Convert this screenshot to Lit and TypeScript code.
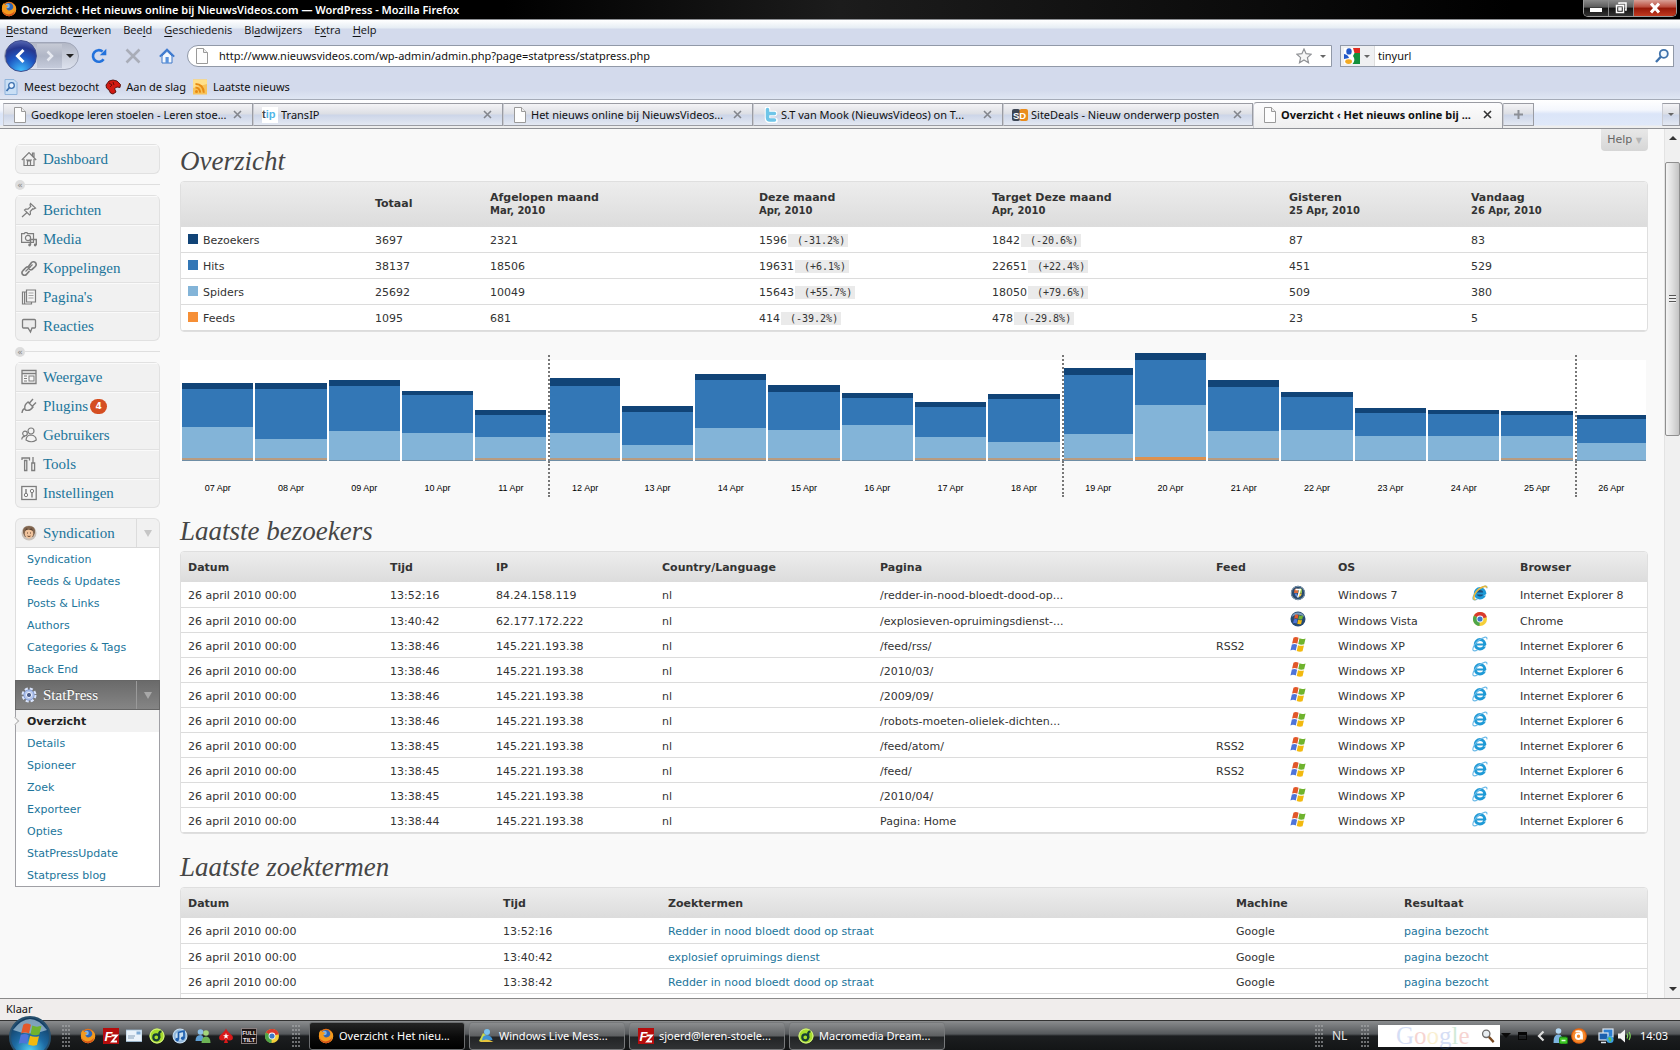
import { LitElement, html, css, svg, nothing } from "lit";
import type { TemplateResult } from "lit";
import { customElement } from "lit/decorators.js";
import { classMap } from "lit/directives/class-map.js";
import { styleMap } from "lit/directives/style-map.js";

/* ---------- icons ---------- */

const flag = (x = 0, y = 0, s = 1) => svg`<g transform="translate(${x} ${y}) scale(${s})">
  <path d="M3 1.5Q5 .3 7.4 1.6L6.3 6.6Q4.2 5.4 1.8 6.5z" fill="#e2582a"/>
  <path d="M8.2 2Q10.4 3.2 13.4 2.2L12.2 7.2Q9.6 8 7.1 7z" fill="#6fb32e"/>
  <path d="M1.6 7.3Q4 6.3 6.1 7.5L5 12.6Q2.8 11.4.4 12.4z" fill="#4f74d9"/>
  <path d="M6.9 7.9Q9.4 8.9 12 8.1L10.8 13.2Q8.2 14 5.8 12.9z" fill="#f2b90f"/></g>`;

const chromeMark = svg`<circle cx="8" cy="8" r="7" fill="#f5cf3a"/>
  <path d="M8 8L1.9 4.5A7 7 0 0 1 14.8 6.2z" fill="#d9392d"/>
  <path d="M8 8L1.9 4.5A7 7 0 0 0 7.5 15z" fill="#4fa64a"/>
  <circle cx="8" cy="8" r="3.4" fill="#fff"/><circle cx="8" cy="8" r="2.6" fill="#3d78c9"/>`;

const firefoxMark = svg`<circle cx="8" cy="8" r="7.2" fill="#e0701a"/>
  <circle cx="8" cy="6.8" r="4.8" fill="#2f66b5"/><circle cx="6.6" cy="5" r="2.2" fill="#7db4e8"/>
  <path d="M1.2 4.5Q2 2.600 3.200 1.700Q3.200 3.200 4.200 4Q6 3.800 7.200 5L5.500 6.400Q5.500 9 8.300 9.400Q11 9.400 12.200 7Q12.600 4.500 11 2.200Q15.500 4 15.200 8.500Q14.500 14.600 8.200 15.200Q1.500 14.800.9 8.500z" fill="#f39a1e"/>
  <path d="M1.200 8.500Q2.500 13 7.500 13.400Q12 13 14 9.500Q13 15 8 15.200Q2 14.600 1.200 8.500z" fill="#d4521a"/>`;

const dreamMark = svg`<circle cx="8" cy="8" r="7.500" fill="#a6dc2c"/><circle cx="8" cy="8" r="7" fill="none" stroke="#d9f48a"/>
  <circle cx="7.300" cy="9.300" r="3" fill="none" stroke="#173f35" stroke-width="2.200"/><path d="M10.200 10V5Q10.500 3.600 12.500 3.400" fill="none" stroke="#173f35" stroke-width="2.200"/>`;

const fzMark = svg`<rect width="16" height="16" fill="#b50d0d"/>
  <text x="1.500" y="13" font-family="Liberation Sans" font-size="13" font-weight="700" font-style="italic" fill="#fff">F</text>
  <path d="M8.500 7.500H14L9 13.500H14" fill="none" stroke="#fff" stroke-width="1.800"/>`;

const ieMark = svg`<circle cx="8" cy="8.300" r="4.700" fill="none" stroke="#1f9ad6" stroke-width="3"/>
  <path d="M5 8.500H14.200" stroke="#1f9ad6" stroke-width="2"/><path d="M11.500 10.500H16V8.500z" fill="#fff"/>
  <path d="M14.800 3.300Q15.600.6 12.400 1.300Q6.500 3 2.400 9Q-.6 14.500 2.200 14.900Q4 14.800 5.600 13.700" fill="none" stroke="#6dbbe8" stroke-width="1.200"/>`;

const stroke = "#7d7d7d";

const ICONS: Record<string, TemplateResult> = {
  firefox: svg`${firefoxMark}`,
  page: svg`<path d="M2.500.5H9.500L13.500 4.500V15.500H2.500z" fill="#fdfdfd" stroke="#9a9a9a"/><path d="M9.500.5V4.500H13.500" fill="#eee" stroke="#9a9a9a"/>`,
  reload: svg`<path d="M12.600 11.200A5.800 5.800 0 1 1 11.600 3.600" fill="none" stroke="#2372dc" stroke-width="2.600"/><path d="M15.300.8V7.300H8.800z" fill="#2372dc"/>`,
  stop: svg`<path d="M1.500 1.500L14.500 14.500M14.500 1.500L1.500 14.500" stroke="#a9adb8" stroke-width="2.600"/>`,
  home: svg`<path d="M3 8V15H13V8L8 3.300z" fill="#f4f8fe" stroke="#3f78c8"/><path d="M.8 8.600L8 1.600L15.200 8.600" fill="none" stroke="#3f7bd0" stroke-width="2"/><rect x="6.500" y="9" width="3.200" height="6" fill="#5b93dc"/>`,
  star: svg`<path d="M8 1L10.100 5.700L15.200 6.200L11.400 9.600L12.500 14.700L8 12L3.500 14.700L4.600 9.600L.8 6.200L5.900 5.700z" fill="#f6f6f6" stroke="#8e9094" stroke-width="1.200"/>`,
  google: svg`<rect width="16" height="16" fill="#fff"/><path d="M9 0H16V5H10.500z" fill="#e02b20"/><path d="M10.500 5H16V16H8.500Q12 12 9 8z" fill="#14903c"/><ellipse cx="5" cy="3.400" rx="2.700" ry="3.200" fill="#2258c8"/><path d="M0 6Q4 6.500 5 10L0 11z" fill="#2258c8"/><ellipse cx="4.600" cy="13.600" rx="3.400" ry="2.300" fill="#f2a922"/>`,
  find: svg`<circle cx="9.800" cy="5.800" r="4" fill="#f3f9ff" stroke="#3f72ac" stroke-width="1.800"/><path d="M6.800 8.800L2 14" stroke="#3f72ac" stroke-width="2.400"/>`,
  visited: svg`<path d="M2 .5H11L14 3.500V15.500H2z" fill="#c9dff5" stroke="#8fb4dc"/><circle cx="8.500" cy="6.500" r="2.800" fill="#eaf4ff" stroke="#3b6fae" stroke-width="1.300"/><path d="M6.500 8.500L3.500 12" stroke="#3b6fae" stroke-width="1.800"/>`,
  mozilla: svg`<path d="M1 6L4 2L8 1L12 2L15.500 5.500L15 8.500L12 8L9.500 9.500L11 13L8 15L5.500 14L4 11L1.500 9z" fill="#d21a12" stroke="#4f0d08" stroke-width=".9"/><path d="M4 4L7 6L5 8M8 3L9 6" stroke="#5e0d08" stroke-width=".9" fill="none"/>`,
  rss: svg`<path d="M1 .5H15V15.500H1z" fill="#f7c35a"/><path d="M1 .5H15V5L1 9z" fill="#ffe08a"/><circle cx="4.500" cy="12.500" r="1.500" fill="#e88b13"/><path d="M3.500 8.500Q7.800 8.700 8.200 13.700M3.500 5Q11.300 5.300 11.800 13.700" fill="none" stroke="#e88b13" stroke-width="1.900"/>`,
  tip: svg`<rect width="16" height="16" fill="#fff"/><text x="0" y="11" font-family="Liberation Sans" font-weight="700" font-size="11" fill="#44464a">t<tspan fill="#4fb6e8">ip</tspan></text>`,
  twitter: svg`<path d="M5.500 2V11Q5.500 13.500 8 13.500H13M5.500 6.500H12.500" fill="none" stroke="#fff" stroke-width="5.500" stroke-linecap="round"/><path d="M5.500 2.500V10.500Q5.500 13 8 13H12.500M5.500 6.500H12.500" fill="none" stroke="#6fc5e8" stroke-width="3.500" stroke-linecap="round"/>`,
  sitedeals: svg`<rect y="2" width="8" height="12" rx="2" fill="#3d4654"/><rect x="7.500" y="2" width="8.500" height="12" rx="2" fill="#e98c1d"/><text x="1" y="11.500" font-family="Liberation Sans" font-weight="700" font-size="9.500" fill="#fff">SD</text>`,
  house: svg`<path d="M.8 9L8 1.500L15.200 9M3 8V14.500H13V8M11.500 5V2H13V6.500M6.500 14.500V10H9.500V14.500M5 9H11" fill="none" stroke="${stroke}" stroke-width="1.200"/>`,
  pin: svg`<path d="M9.500 1.500L14.500 6L12.500 7L11.800 6.800L9.200 9.500L9.500 12L8.500 13L3.500 8L4.600 7L7 7.200L9.800 4.500L9 3zM6 10.500L1 15" fill="#f2f2f2" stroke="${stroke}" stroke-width="1.200"/>`,
  media: svg`<path d="M.6 2.600H3.500L4 1.600H6L6.500 2.600H12.500V11.400H.6z" fill="#f2f2f2" stroke="${stroke}" stroke-width="1.200"/><circle cx="7" cy="7" r="2.600" fill="none" stroke="${stroke}" stroke-width="1.200"/><path d="M9.500 8.500H15.300V14M9.500 8.500V14" fill="none" stroke="${stroke}" stroke-width="1.400"/><circle cx="8.600" cy="14" r="1.400" fill="${stroke}"/><circle cx="14.200" cy="14" r="1.400" fill="${stroke}"/>`,
  link: svg`<path d="M7.500 6.500L10.500 2.500A2.700 2.700 0 1 1 14.300 6.500L11 9.500A2.500 2.500 0 0 1 8 9M9 8A2.600 2.600 0 0 0 5 7.500L2 10.600A2.600 2.600 0 1 0 5.800 14L8.500 11" fill="none" stroke="${stroke}" stroke-width="1.700"/><path d="M4.500 11.500L11.500 4.500" stroke="${stroke}" stroke-width="1.200"/>`,
  pages: svg`<path d="M5.500 1H14.500V13H5.500zM5 3H1.500V15H10.500V13.500M3.600 3V14.500" fill="#f4f4f4" stroke="${stroke}" stroke-width="1.200"/><path d="M7.500 4H12.500M7.500 6.500H12.500M7.500 9H12.500" stroke="#a5a5a5"/>`,
  comment: svg`<path d="M2.500 1.500H13.500Q14.500 1.500 14.500 2.500V9Q14.500 10 13.500 10H11L9.500 14L7 10H2.500Q1.500 10 1.500 9V2.500Q1.500 1.500 2.500 1.500z" fill="#ececec" stroke="${stroke}" stroke-width="1.300"/>`,
  theme: svg`<path d="M1 1.500H15V14.500H1zM1 4.500H15" fill="#f6f6f6" stroke="${stroke}" stroke-width="1.300"/><path d="M3 7H6M3 9.500H6M3 12H6" stroke="${stroke}"/><rect x="8" y="7" width="5" height="5" fill="none" stroke="${stroke}"/>`,
  plug: svg`<path d="M1 15Q1.500 11 4 10.500M4 11Q2.800 7 7 4L12 9Q9 13.500 4.500 12zM8 5.500L12 1M11 8.500L15 4.500" fill="#f2f2f2" stroke="${stroke}" stroke-width="1.400"/>`,
  users: svg`<circle cx="10" cy="4" r="3" fill="#f2f2f2" stroke="${stroke}" stroke-width="1.200"/><circle cx="4" cy="6.500" r="2.300" fill="#f2f2f2" stroke="${stroke}" stroke-width="1.200"/><path d="M5 13Q5.500 8 10 8Q15 8.500 15.300 13Q10.500 16.500 5 13zM.8 12.500Q.8 9.500 4 9.300" fill="#f2f2f2" stroke="${stroke}" stroke-width="1.200"/>`,
  tools: svg`<path d="M1 4V2H8.500V4.500M3.600 4.500H5.800V14.500H3.600zM12 1V6.500M10.800 7H13.600V14.500H10.800z" fill="#f2f2f2" stroke="${stroke}" stroke-width="1.300"/>`,
  settings: svg`<rect x=".8" y="1.500" width="14.400" height="13" fill="#f6f6f6" stroke="${stroke}" stroke-width="1.300"/><path d="M5 4V8M11 8V12.500" stroke="${stroke}" stroke-width="1.400"/><circle cx="5" cy="10" r="1.700" fill="none" stroke="${stroke}"/><circle cx="11" cy="6" r="1.700" fill="none" stroke="${stroke}"/>`,
  face: svg`<circle cx="8" cy="8" r="7.500" fill="#c9c0b8"/><path d="M2 8Q1 1 8 1Q15 1 14 8L12 12H4z" fill="#80654f"/><ellipse cx="8" cy="8.500" rx="4.200" ry="5" fill="#f0c39c"/><path d="M4 6Q7 3 12 6L11 3.500H5z" fill="#5d4433"/><path d="M6 8H7M9 8H10M6.500 11Q8 12 9.500 11" stroke="#63432f" fill="none"/>`,
  gear: svg`<circle cx="8" cy="8" r="6.200" fill="none" stroke="#d9e4fb" stroke-width="2.600" stroke-dasharray="3 1.870"/><circle cx="8" cy="8" r="5.200" fill="#b3c6ee" stroke="#7d96cf" stroke-width=".8"/><circle cx="8" cy="8" r="2.600" fill="#4e5f8c" stroke="#eef3ff"/>`,
  win7: svg`<circle cx="8" cy="8" r="7.200" fill="#28496c"/><circle cx="8" cy="8" r="6.600" fill="none" stroke="#7e97ad"/><path d="M4.500 4.500Q6.500 3 8 4V8H4z" fill="#d96a3a"/><path d="M8.500 4Q10 3 12 4V8H8.500z" fill="#9ac054"/><path d="M4.500 8.500H7V12Q5.500 11.500 4.500 8.500z" fill="#5f86dd"/><path d="M9 8.500H12Q11.500 11 9 12z" fill="#f2c83a"/><path d="M5.500 4.500H10.200L7.700 12.500" stroke="#fff" stroke-width="1.500" fill="none"/>`,
  vista: svg`<circle cx="8" cy="8" r="7.500" fill="#274a72"/><path d="M1.500 6Q8 1 14.500 6A7 7 0 0 0 1.500 6z" fill="#7e9dbc"/>${flag(2.7, 2.7, 0.78)}`,
  xp: flag(0, 0, 1.16),
  ie: ieMark,
  ie8: svg`<circle cx="8.500" cy="8.500" r="5" fill="#1f4f7c"/>${ieMark}<path d="M14.600 2.800Q14.600.8 12 1.500Q5.500 3.500 2.600 9.500Q.5 14.500 3.500 14.700" fill="none" stroke="#e8b73a" stroke-width="1.700"/>`,
  chrome: svg`${chromeMark}`,
  filezilla: svg`${fzMark}`,
  mail: svg`<rect y="2" width="16" height="11.500" fill="#e9f2fa" stroke="#9fbdd6" stroke-width=".8"/><rect x="10.500" y="3.500" width="4" height="3" fill="#7eaad4"/><path d="M2 8H9M2 10H8" stroke="#86a0b8"/>`,
  dream: svg`${dreamMark}`,
  itunes: svg`<circle cx="8" cy="8" r="7.500" fill="#c8dff2"/><circle cx="8" cy="8" r="5.500" fill="none" stroke="#8fb6dc" stroke-width="2"/><path d="M6.500 11.500V4.500L12 3V10" fill="none" stroke="#1f5fae" stroke-width="1.700"/><circle cx="5.200" cy="11.600" r="1.800" fill="#1f5fae"/><circle cx="10.700" cy="10.200" r="1.800" fill="#1f5fae"/>`,
  messenger: svg`<circle cx="5.500" cy="4" r="2.800" fill="#8cc0e6"/><path d="M.5 13Q.5 7 5.500 7Q9 7.500 9 13z" fill="#5f9fd4"/><circle cx="11" cy="5" r="2.800" fill="#a5d57a"/><path d="M6.500 15Q6.500 8.500 11 8.500Q15.500 8.500 15.500 15z" fill="#6db456"/>`,
  poker: svg`<path d="M8 .5Q9 3 14.500 8Q16 12 12 12.500Q10 12.500 9 11.500L10 15H6L7 11.500Q6 12.500 4 12.500Q0 12 1.500 8Q7 3 8 .5z" fill="#d91a1a"/><path d="M8 5L8.800 7.200H11L9.200 8.500L9.900 10.700L8 9.400L6.100 10.700L6.800 8.500L5 7.200H7.200z" fill="#fff"/>`,
  fulltilt: svg`<rect x=".5" y=".5" width="15" height="15" fill="#1d1414" stroke="#8a7f7f"/><text x="1.200" y="7" font-family="Liberation Sans" font-weight="700" font-size="5.500" fill="#f1eaea">FULL</text><text x="2" y="13.500" font-family="Liberation Sans" font-weight="700" font-size="6" fill="#f1eaea">TILT</text>`,
  live: svg`<path d="M1 13L5 5L9 8L7 14z" fill="#c9d94a"/><circle cx="9" cy="4" r="3" fill="#7ac1ee"/><path d="M4 13Q4 7 9 7Q14 8 14.500 12z" fill="#3f92d4"/><path d="M1 14Q8 9 15.500 14z" fill="#e6c33b"/>`,
  lens: svg`<circle cx="6" cy="5.500" r="4.200" fill="#e8eef2" stroke="#6c6c6c" stroke-width="1.500"/><path d="M9 9L14.500 15" stroke="#7a4a22" stroke-width="2.600"/>`,
  buddy: svg`<circle cx="6.500" cy="3" r="2.800" fill="#b5d8f2"/><path d="M1.500 15Q1 6.500 6.500 6.500Q11 6.500 11 15z" fill="#7cb4e0"/><rect x="7.500" y="9" width="8" height="7" rx="1.500" fill="#3cc424" stroke="#1a7a10"/><path d="M9.500 12.500H13.500" stroke="#e8ffe0" stroke-width="1.500"/>`,
  avast: svg`<circle cx="8" cy="8" r="7.800" fill="#e8640e"/><circle cx="8" cy="8" r="6.600" fill="#f58a2e"/><circle cx="7.500" cy="8.300" r="2.700" fill="none" stroke="#fff" stroke-width="2"/><path d="M4.500 3.600Q11 2 11 7V11.500" fill="none" stroke="#fff" stroke-width="1.800"/>`,
  network: svg`<rect x="5" y="1" width="10" height="8" fill="#2e7fd2" stroke="#dce6f0" stroke-width="1.200"/><rect x="1" y="5" width="9" height="7" fill="#1c5fae" stroke="#dce6f0" stroke-width="1.200"/><path d="M3 14.500H8" stroke="#dce6f0" stroke-width="1.500"/><circle cx="12" cy="11.500" r="3.600" fill="#3aa2e2"/><path d="M10 10Q12 8.500 13 10.500T12 14z" fill="#5fc04a"/>`,
  sound: svg`<path d="M1 5.500H3.500L8 1.500V14.500L3.500 10.500H1z" fill="#f2f2f2"/><path d="M10 5.500Q11.500 8 10 10.500M12 4Q14.500 8 12 12" stroke="#7ed65a" fill="none" stroke-width="1.200"/>`,
};

const icon = (name: string, cls = "ic") =>
  html`<svg class=${cls} viewBox="0 0 16 16" aria-hidden="true">${ICONS[name]}</svg>`;

const base = css`
  *, *::before, *::after { box-sizing: border-box; }
  button, input { font: inherit; color: inherit; border: 0; padding: 0; margin: 0; background: none; }
  a { text-decoration: none; color: inherit; }
  svg { display: block; flex: none; }
  .ic { width: 16px; height: 16px; }
`;

/* ---------- browser window frame ---------- */

const MENUS: [string, string, string][] = [
  ["", "B", "estand"], ["Be", "w", "erken"], ["Bee", "l", "d"], ["", "G", "eschiedenis"],
  ["Bl", "a", "dwijzers"], ["E", "x", "tra"], ["", "H", "elp"],
];

const TABS = [
  { icon: "page", title: "Goedkope leren stoelen - Leren stoe..." },
  { icon: "tip", title: "TransIP" },
  { icon: "page", title: "Het nieuws online bij NieuwsVideos..." },
  { icon: "twitter", title: "S.T van Mook (NieuwsVideos) on T..." },
  { icon: "sitedeals", title: "SiteDeals - Nieuw onderwerp posten" },
  { icon: "page", title: "Overzicht ‹ Het nieuws online bij ...", active: true },
];

@customElement("browser-chrome")
class BrowserChrome extends LitElement {
  static styles = [base, css`
    :host { display: block; font: 11px/16px "Noto Sans", "Open Sans", sans-serif; color: #111; }
    .title { display: flex; height: 20px; padding-left: 1px; background: linear-gradient(90deg, #000 30%, #1c1c1c 50%, #0b0b0b 75%, #000 90%); border-bottom: 1px solid #8d8f93; color: #fff; }
    .title .ic { margin: 1px 4px 0 0; }
    .title h1 { flex: 1; margin: 0; font-size: 11px; font-weight: 600; line-height: 20px; }
    .win { display: flex; height: 17px; margin-right: 3px; border: 1px solid #9b9b9b; border-top: 0; border-radius: 0 0 5px 5px; overflow: hidden; }
    .win button { display: grid; place-items: center; width: 25px; background: linear-gradient(#8b8b8b, #5b5b5b 45%, #111 50%, #333); border-right: 1px solid #8a8a8a; }
    .win .x { width: 42px; background: linear-gradient(#d9a097, #b9493a 45%, #941708 50%, #c23a20); border-right: 0; }
    .bars { background: linear-gradient(#fff, #e6edf4 8px, #d3daec 9px, #d3daec 70px, #dfe6f3); border-bottom: 1px solid #a5abb8; }
    .menu { display: flex; gap: 12px; height: 20px; padding-left: 6px; line-height: 20px; font-family: "Open Sans", "Noto Sans", sans-serif; }
    .menu u { text-underline-offset: 2px; }
    .nav { display: flex; align-items: center; height: 32px; padding: 0 6px 0 4px; }
    .keyhole { display: flex; align-items: center; width: 75px; height: 28px; border: 1px solid #a0a6b8; border-radius: 14px; background: linear-gradient(#b3b8c6, #dde2ee); }
    .back { display: grid; place-items: center; flex: none; width: 32px; height: 32px; border-radius: 50%; border: 1px solid #3d4c8e; background: radial-gradient(circle at 50% 100%, #3fc0ff, #1e54c0 45%, #26378f 70%, #6e7fc4); }
    .fwd { display: grid; place-items: center; flex: 1; height: 24px; background: linear-gradient(#c6cad5, #b0b6c6 50%, #c5cbdb); }
    .drop { display: grid; place-items: center; width: 16px; height: 24px; }
    .arrow { width: 0; height: 0; border: 4px solid transparent; border-top-color: #222; border-bottom: 0; }
    .arrow.grey { border-width: 3px; border-bottom: 0; border-top-color: #666; }
    .tool { display: grid; place-items: center; width: 34px; height: 28px; }
    .tools { display: flex; padding: 0 3px; }
    .field { display: flex; align-items: center; height: 22px; background: #fff; border: 1px solid #9199a8; }
    .field input { flex: 1; min-width: 0; outline: 0; }
    .url { flex: 1; padding: 0 5px 0 6px; border-radius: 12px 0 0 12px; gap: 8px; }
    .url input { padding-left: 1px; }
    .find { width: 20%; margin-left: 8px; padding-right: 3px; }
    .engine { display: flex; align-items: center; gap: 4px; height: 20px; padding: 0 4px 0 3px; background: #eff0f2; border-right: 1px solid #ddd; margin-right: 3px; }
    .marks { display: flex; gap: 6px; height: 27px; padding: 3px 0 0 3px; align-items: center; }
    .marks a { display: flex; align-items: center; gap: 5px; }
    .tabs { display: flex; align-items: flex-start; height: 29px; padding: 3px 0 3px 3px; border-bottom: 1px solid #8f9196; background: linear-gradient(#fff, #f4f7fd 10px, #dbe5f8 14px, #dfe8f9 25px, #eee 26px); }
    .tab { display: flex; align-items: center; flex: 0 1 250px; height: 23px; padding: 0 10px 0 8px; border: 1px solid #9a9ca3; border-left-color: #c9cbd2; background: linear-gradient(#f4f4f6, #dcdee4 10px, #ccd5e8 11px, #e3e8f2); }
    .tab .t { flex: 1; min-width: 0; margin-left: 3px; text-align: left; white-space: nowrap; overflow: hidden; }
    .tab.on { height: 26px; margin-top: -1px; padding-bottom: 2px; border-radius: 4px 4px 0 0; border-bottom: 0; background: linear-gradient(#fcfcfd, #efefef); font-weight: 700; }
    .tab.flush { width: 31px; flex: none; padding: 0; justify-content: center; }
    .tab.list { margin-left: auto; width: 18px; }
  `];

  private cross(color: string) {
    return html`<svg width="9" height="9" viewBox="0 0 9 9"><path d="M1 1L8 8M8 1L1 8" stroke=${color} stroke-width="1.600"/></svg>`;
  }

  render() {
    return html`
      <div class="title">
        ${icon("firefox")}<h1>Overzicht ‹ Het nieuws online bij NieuwsVideos.com — WordPress - Mozilla Firefox</h1>
        <div class="win">
          <button aria-label="Minimaliseren"><svg width="12" height="12"><rect y="6" width="12" height="4" fill="#fff"/></svg></button>
          <button aria-label="Verkleinen"><svg width="12" height="12"><path d="M4 2V1H11V8H10M1.500 3.500H8.500V10.500H1.500zM4 6H6V8H4z" fill="none" stroke="#fff" stroke-width="1.500"/></svg></button>
          <button class="x" aria-label="Sluiten"><svg width="12" height="12"><path d="M2 1.500L10 10.500M10 1.500L2 10.500" stroke="#fff" stroke-width="3"/></svg></button>
        </div>
      </div>
      <div class="bars">
        <div class="menu">${MENUS.map(([a, k, b]) => html`<button>${a}<u>${k}</u>${b}</button>`)}</div>
        <div class="nav">
          <div class="keyhole">
            <button class="back" aria-label="Terug"><svg width="16" height="16"><path d="M10.500 2L4.500 8L10.500 14" fill="none" stroke="#fff" stroke-width="3"/></svg></button>
            <button class="fwd" aria-label="Vooruit"><svg width="12" height="12"><path d="M3.500 1.500L8 6L3.500 10.500" fill="none" stroke="#e6e9f0" stroke-width="2.500"/></svg></button>
            <button class="drop" aria-label="Geschiedenis"><span class="arrow"></span></button>
          </div>
          <div class="tools">
            <button class="tool" aria-label="Vernieuwen">${icon("reload")}</button>
            <button class="tool" aria-label="Stoppen">${icon("stop")}</button>
            <button class="tool" aria-label="Startpagina">${icon("home")}</button>
          </div>
          <div class="field url">
            ${icon("page")}
            <input aria-label="Adres" .value=${"http://www.nieuwsvideos.com/wp-admin/admin.php?page=statpress/statpress.php"} />
            <button aria-label="Bladwijzer">${icon("star")}</button>
            <span class="arrow grey"></span>
          </div>
          <div class="field find">
            <button class="engine" aria-label="Zoekmachine">${icon("google")}<span class="arrow grey"></span></button>
            <input aria-label="Zoeken" .value=${"tinyurl"} />
            <button aria-label="Zoek">${icon("find")}</button>
          </div>
        </div>
        <div class="marks">
          <a href="#">${icon("visited")}Meest bezocht</a>
          <a href="#">${icon("mozilla")}Aan de slag</a>
          <a href="#">${icon("rss")}Laatste nieuws</a>
        </div>
      </div>
      <div class="tabs">
        ${TABS.map((t) => html`<div class=${classMap({ tab: true, on: !!t.active })}>
          ${icon(t.icon)}<button class="t">${t.title}</button>
          <button aria-label="Tabblad sluiten">${this.cross(t.active ? "#333" : "#83868d")}</button>
        </div>`)}
        <button class="tab flush" aria-label="Nieuw tabblad"><svg width="11" height="11"><path d="M5.500 1V10M1 5.500H10" stroke="#8c8f96" stroke-width="2"/></svg></button>
        <button class="tab flush list" aria-label="Alle tabbladen"><span class="arrow grey"></span></button>
      </div>`;
  }
}

/* ---------- WordPress side menu ---------- */

type Item = { icon: string; label: string; count?: number };
const GROUPS: Item[][] = [
  [{ icon: "house", label: "Dashboard" }],
  [
    { icon: "pin", label: "Berichten" }, { icon: "media", label: "Media" }, { icon: "link", label: "Koppelingen" },
    { icon: "pages", label: "Pagina's" }, { icon: "comment", label: "Reacties" },
  ],
  [
    { icon: "theme", label: "Weergave" }, { icon: "plug", label: "Plugins", count: 4 }, { icon: "users", label: "Gebruikers" },
    { icon: "tools", label: "Tools" }, { icon: "settings", label: "Instellingen" },
  ],
];
const SYNDICATION = ["Syndication", "Feeds & Updates", "Posts & Links", "Authors", "Categories & Tags", "Back End"];
const STATPRESS = ["Overzicht", "Details", "Spioneer", "Zoek", "Exporteer", "Opties", "StatPressUpdate", "Statpress blog"];

@customElement("admin-menu")
class AdminMenu extends LitElement {
  static styles = [base, css`
    :host { display: block; width: 145px; color: #21759b; font: 11px/24px "DejaVu Sans", Verdana, sans-serif; }
    .group { border: 1px solid #e1e1e1; border-top: 0; border-radius: 6px; overflow: hidden; background: #f1f1f1; }
    .item { display: flex; align-items: center; gap: 6px; height: 29px; padding-left: 5px; border-top: 1px solid #e1e1e1; box-shadow: inset 0 1px #fafafa; font: 15px/28px "Liberation Serif", Georgia, serif; }
    .count { width: 17px; height: 15px; margin-left: -4px; border-radius: 8px; background: #d54e21; color: #fff; font: bold 9px/15px "DejaVu Sans", sans-serif; text-align: center; }
    .sep { display: flex; align-items: center; height: 21px; }
    .sep button { width: 10px; height: 10px; border-radius: 5px; background: #ddd; color: #888; font-size: 9px; line-height: 8px; }
    .sep::after { content: ""; flex: 1; height: 1px; background: #dfdfdf; }
    .plugins { margin-top: 10px; }
    .head { display: flex; height: 30px; border: 1px solid #e1e1e1; border-bottom-color: #d9d9d9; border-radius: 6px 6px 0 0; background: #f1f1f1; }
    .head .item { flex: 1; height: 28px; border: 0; box-shadow: none; }
    .toggle { display: grid; place-items: center; width: 23px; border-left: 1px solid #dcdcdc; }
    .toggle::before { content: ""; border: 4px solid transparent; border-top: 7px solid #c6c6c6; border-bottom: 0; }
    .cur { border: 1px solid #666; border-radius: 0; background: linear-gradient(#6a6a6a, #858585); color: #fff; }
    .cur .item { text-shadow: 0 -1px #555; }
    .cur .toggle { border-left-color: #9a9a9a; }
    .cur .toggle::before { border-top-color: #a8a8a8; }
    ul { list-style: none; margin: 0; padding: 0; background: #fff; border: 0 solid #dfdfdf; border-width: 0 1px; }
    .last { border-color: #a0a0a5; border-bottom-width: 1px; }
    li a { display: block; height: 22px; padding-left: 11px; }
    .here { position: relative; background: #f2f2f2; color: #222; font-weight: 700; }
    .here::before { content: ""; position: absolute; left: -4px; top: 8px; width: 6px; height: 6px; background: #f9f9f9; border: 1px solid #b5b5b5; border-left: 0; border-bottom: 0; transform: rotate(45deg); }
  `];

  private item(i: Item) {
    return html`<a class="item" href="#">${icon(i.icon)}<span>${i.label}</span>${i.count ? html`<span class="count">${i.count}</span>` : nothing}</a>`;
  }

  render() {
    return html`<nav>
      ${GROUPS.map((g, n) => html`
        ${n ? html`<div class="sep"><button aria-label="Menu inklappen">«</button></div>` : nothing}
        <div class="group">${g.map((i) => this.item(i))}</div>`)}
      <div class="plugins">
        <div class="head">${this.item({ icon: "face", label: "Syndication" })}<button class="toggle" aria-label="Syndication"></button></div>
        <ul>${SYNDICATION.map((s) => html`<li><a href="#">${s}</a></li>`)}</ul>
        <div class="head cur">${this.item({ icon: "gear", label: "StatPress" })}<button class="toggle" aria-label="StatPress"></button></div>
        <ul class="last">${STATPRESS.map((s, i) => html`<li><a class=${i ? "" : "here"} href="#">${s}</a></li>`)}</ul>
      </div>
    </nav>`;
  }
}

/* ---------- statistics page ---------- */

const SUMMARY = [
  ["visitors", "Bezoekers", "3697", "2321", "1596", "(-31.2%)", "1842", "(-20.6%)", "87", "83"],
  ["hits", "Hits", "38137", "18506", "19631", "(+6.1%)", "22651", "(+22.4%)", "451", "529"],
  ["spiders", "Spiders", "25692", "10049", "15643", "(+55.7%)", "18050", "(+79.6%)", "509", "380"],
  ["feeds", "Feeds", "1095", "681", "414", "(-39.2%)", "478", "(-29.8%)", "23", "5"],
];

/* Per day: visitors, hits, spiders, feeds, in chart units. */
const FIRST_DAY = 7;
const DAYS = [
  [6, 38, 32, 2], [6, 50, 20, 2], [6, 45, 30, 0], [4, 38, 28, 0], [5, 22, 22, 2],
  [8, 47, 26, 2], [6, 33, 14, 2], [6, 48, 31, 2], [7, 38, 29, 2], [5, 27, 36, 0],
  [5, 30, 22, 2], [5, 43, 17, 2], [7, 59, 25, 2], [7, 45, 53, 3], [7, 44, 28, 2],
  [5, 33, 31, 0], [5, 23, 25, 0], [4, 22, 25, 0], [4, 21, 23, 2], [4, 24, 18, 0],
];
const WEEK_STARTS = [12, 19, 26];

const DATE = "26 april 2010 00:00";
const NT = "145.221.193.38";
const VISITS = [
  ["13:52:16", "84.24.158.119", "/redder-in-nood-bloedt-dood-op...", "", "win7", "Windows 7", "ie8", "Internet Explorer 8"],
  ["13:40:42", "62.177.172.222", "/explosieven-opruimingsdienst-...", "", "vista", "Windows Vista", "chrome", "Chrome"],
  ...[
    ["13:38:46", "/feed/rss/", "RSS2"], ["13:38:46", "/2010/03/", ""], ["13:38:46", "/2009/09/", ""],
    ["13:38:46", "/robots-moeten-olielek-dichten...", ""], ["13:38:45", "/feed/atom/", "RSS2"], ["13:38:45", "/feed/", "RSS2"],
    ["13:38:45", "/2010/04/", ""], ["13:38:44", "Pagina: Home", ""],
  ].map(([t, p, f]) => [t, NT, p, f, "xp", "Windows XP", "ie", "Internet Explorer 6"]),
];
const SEARCHES = [
  ["13:52:16", "Redder in nood bloedt dood op straat"],
  ["13:40:42", "explosief opruimings dienst"],
  ["13:38:42", "Redder in nood bloedt dood op straat"],
];

/* Column widths are shares of the full table width. */
const cols = (shares: number[]) => {
  const total = shares.reduce((a, b) => a + b, 0);
  return html`<colgroup>${shares.map((s) => html`<col style=${styleMap({ width: `${(s / total) * 100}%` })} />`)}</colgroup>`;
};

@customElement("stats-page")
class StatsPage extends LitElement {
  static styles = [base, css`
    :host { display: block; font: 11px/15px "DejaVu Sans", Verdana, sans-serif; color: #333; }
    .top { display: flex; justify-content: space-between; align-items: flex-start; }
    .help { height: 22px; padding: 0 6px; border-radius: 0 0 4px 4px; background: linear-gradient(#e8e8e8, #d6d6d6); color: #666; }
    .help span { color: #b5b5b5; font-size: 8px; }
    h2 { margin: 0; padding: 18px 0 5px; font: italic 27px/30px "Liberation Serif", Georgia, serif; color: #464646; }
    .top h2 { padding-top: 17px; }
    table { width: 100%; table-layout: fixed; border-collapse: separate; border-spacing: 0; border: 1px solid #dfdfdf; border-radius: 4px; background: #fff; overflow: hidden; }
    th, td { padding: 0 0 0 7px; text-align: left; white-space: nowrap; }
    thead th { height: 30px; background: linear-gradient(#ededed, #dcdcdc); font-weight: 700; }
    .sum thead th { height: 45px; padding-bottom: 2px; line-height: 13px; }
    thead small { display: block; font-size: 10px; }
    td { height: 25px; padding-top: 2px; border-bottom: 1px solid #dcdcdc; }
    .sum td, tbody tr:first-child td { height: 26px; }
    td a { color: #21759b; }
    td .ic { margin-bottom: 5px; }
    .sw { display: inline-block; width: 10px; height: 10px; margin-right: 5px; }
    .visitors { background: #114477; } .hits { background: #3377b6; } .spiders { background: #83b4d8; } .feeds { background: #f68f36; }
    code { margin-left: 1px; padding: 1px 3px; background: #eaeaea; font: 10px/13px "DejaVu Sans Mono", monospace; }
    .chart { display: flex; height: 142px; margin: 23px 2px 1px 0; }
    .day { flex: 1; display: flex; flex-direction: column; margin-top: 5px; padding-left: 2px; background: linear-gradient(#fff 101px, #f9f9f9 101px); font: 9px/12px "Liberation Sans", Arial, sans-serif; color: #000; text-align: center; }
    .bars { display: flex; flex-direction: column; flex: none; justify-content: flex-end; height: 101px; border-bottom: 1px solid #6f8ea6; }
    .bars i { display: block; flex: none; }
    .bars .feeds { background: #b89b80; } .bars .peak { background: #dd914e; }
    .week { margin-top: 0; background: linear-gradient(#f9f9f9 5px, #fff 5px, #fff 106px, #f9f9f9 106px); }
    .week .bars, .week .lab { border-left: 2px dotted #777; }
    .week .bars { height: 106px; }
    .lab { flex: 1; padding-top: 21px; }
  `];

  private day(v: number[], i: number) {
    const d = FIRST_DAY + i;
    const kinds = ["visitors", "hits", "spiders", v[3] > 2 ? "feeds peak" : "feeds"];
    const heights = [v[0], v[1], v[2] - 1, v[3]];
    return html`<div class=${classMap({ day: true, week: WEEK_STARTS.includes(d) })}>
      <div class="bars">${kinds.map((k, n) => html`<i class=${k} style=${styleMap({ height: `${heights[n]}px` })}></i>`)}</div>
      <div class="lab">${String(d).padStart(2, "0")} Apr</div>
    </div>`;
  }

  render() {
    const th = (a: string, b = "") => html`<th scope="col">${a}${b ? html`<small>${b}</small>` : nothing}</th>`;
    return html`
      <div class="top"><h2>Overzicht</h2><button class="help">Help <span>▼</span></button></div>
      <table class="sum">
        ${cols([187, 115, 269, 233, 297, 182, 183])}
        <thead><tr>${th("")}${th("Totaal")}${th("Afgelopen maand", "Mar, 2010")}${th("Deze maand", "Apr, 2010")}${th("Target Deze maand", "Apr, 2010")}${th("Gisteren", "25 Apr, 2010")}${th("Vandaag", "26 Apr, 2010")}</tr></thead>
        <tbody>${SUMMARY.map(([k, n, t, l, m, mp, g, gp, y, v]) => html`<tr>
          <td><span class="sw ${k}"></span>${n}</td><td>${t}</td><td>${l}</td>
          <td>${m}<code>&nbsp;${mp}</code></td><td>${g}<code>&nbsp;${gp}</code></td><td>${y}</td><td>${v}</td></tr>`)}</tbody>
      </table>
      <div class="chart">${DAYS.map((v, i) => this.day(v, i))}</div>
      <h2>Laatste bezoekers</h2>
      <table class="visits">
        ${cols([202, 106, 166, 218, 336, 74, 48, 134, 48, 134])}
        <thead><tr>${["Datum", "Tijd", "IP", "Country/Language", "Pagina", "Feed", "", "OS", "", "Browser"].map((t) => th(t))}</tr></thead>
        <tbody>${VISITS.map(([t, ip, p, f, oi, os, bi, b]) => html`<tr>
          <td>${DATE}</td><td>${t}</td><td>${ip}</td><td>nl</td><td>${p}</td><td>${f}</td>
          <td>${icon(oi)}</td><td>${os}</td><td>${icon(bi)}</td><td>${b}</td></tr>`)}</tbody>
      </table>
      <h2>Laatste zoektermen</h2>
      <table>
        ${cols([315, 165, 568, 168, 250])}
        <thead><tr>${["Datum", "Tijd", "Zoektermen", "Machine", "Resultaat"].map((t) => th(t))}</tr></thead>
        <tbody>${SEARCHES.map(([t, q]) => html`<tr>
          <td>${DATE}</td><td>${t}</td><td><a href="#">${q}</a></td><td>Google</td><td><a href="#">pagina bezocht</a></td></tr>`)}
          <tr><td colspan="5"></td></tr></tbody>
      </table>`;
  }
}

/* ---------- Windows taskbar ---------- */

const QUICK = ["firefox", "filezilla", "mail", "dream", "itunes", "messenger", "poker", "fulltilt", "chrome"];
const TASKS = [
  { icon: "firefox", label: "Overzicht ‹ Het nieu...", active: true },
  { icon: "live", label: "Windows Live Mess..." },
  { icon: "filezilla", label: "sjoerd@leren-stoele..." },
  { icon: "dream", label: "Macromedia Dream..." },
];

@customElement("task-bar")
class TaskBar extends LitElement {
  static styles = [base, css`
    :host { display: block; font: 11px/16px "Noto Sans", "Open Sans", sans-serif; color: #fff; }
    .bar { display: flex; align-items: center; height: 30px; padding: 0 12px 0 8px; border-top: 1px solid #333; background: linear-gradient(#8a8c8e, #55585b 13px, #1c1e20 15px, #131516); }
    .orb { align-self: flex-start; width: 44px; height: 34px; margin: -5px 10px 0 0; overflow: hidden; }
    .grip { width: 9px; height: 22px; margin-right: 8px; background: radial-gradient(circle at 1px 1px, #a9abad 1px, transparent 1px) 0 0 / 3px 4px; opacity: .6; }
    .quick { display: flex; gap: 7px; margin-right: 12px; padding-left: 1px; }
    .quick .ic { width: 16px; }
    .tasks { display: flex; flex: 1; gap: 4px; }
    .task { display: flex; align-items: center; gap: 5px; width: 156px; height: 28px; padding-left: 8px; border: 1px solid #77797b; border-radius: 3px; background: linear-gradient(#8b8d8f, #5d5f61 13px, #222426 14px, #303234); white-space: nowrap; }
    .task.on { border-color: #6b6d6f; background: linear-gradient(#242424, #0a0a0a 14px, #000); }
    .lang { width: 29px; font-size: 12px; color: #e5e5e5; }
    .desk { position: relative; display: flex; align-items: center; width: 122px; height: 22px; background: #fff; padding-right: 5px; color: #222; }
    .desk input { flex: 1; min-width: 0; height: 22px; padding-left: 4px; outline: 0; }
    .desk .mark { position: absolute; left: 18px; top: 0; font: 25px/22px "Liberation Serif", serif; opacity: .2; pointer-events: none; }
    .b { color: #3460d0; } .r { color: #d62c20; } .y { color: #e5b520; } .g { color: #189a3e; }
    .desk .ic { width: 14px; height: 14px; }
    .arrow { width: 0; height: 0; margin-left: 1px; border: 5px solid transparent; border-top-color: #0a0a0a; border-bottom: 0; }
    .box { width: 9px; height: 8px; margin: 0 6px 0 4px; border: 1px solid #050505; border-top-width: 3px; }
    .tray { display: flex; align-items: center; gap: 3px; }
    .more { width: 13px; }
    .net { margin-left: 8px; }
    .clock { margin-left: 4px; }
  `];

  render() {
    return html`<footer class="bar">
      <button class="orb" aria-label="Start"><svg width="44" height="44" viewBox="0 0 44 44">
        <defs><radialGradient id="orb" cx=".5" cy=".85" r=".8"><stop offset="0" stop-color="#4fd0f5"/><stop offset=".5" stop-color="#1d6aa3"/><stop offset="1" stop-color="#123a5e"/></radialGradient></defs>
        <circle cx="22" cy="21" r="20" fill="url(#orb)" stroke="#27506e" stroke-width="2"/>
        <path d="M5 14Q22 -8 39 14Q22 21 5 14z" fill="#b9d3e4" opacity=".65"/>
        ${flag(10, 6, 1.75)}</svg></button>
      <span class="grip"></span>
      <div class="quick">${QUICK.map((q) => html`<button aria-label=${q}>${icon(q)}</button>`)}</div>
      <span class="grip"></span>
      <div class="tasks">${TASKS.map((t) => html`<button class=${classMap({ task: true, on: !!t.active })}>${icon(t.icon)}${t.label}</button>`)}</div>
      <span class="grip"></span><span class="lang">NL</span><span class="grip"></span>
      <div class="desk"><input aria-label="Google zoeken" /><span class="mark" aria-hidden="true"><span class="b">G</span><span class="r">o</span><span class="y">o</span><span class="b">g</span><span class="g">l</span><span class="r">e</span></span>${icon("lens")}</div>
      <div class="tray">
        <span class="arrow"></span><span class="box"></span>
        <button class="more" aria-label="Meer pictogrammen"><svg width="9" height="12"><path d="M7.500 1.500L3 6L7.500 10.500" fill="none" stroke="#ddd" stroke-width="2.200"/></svg></button>
        ${icon("buddy")}${icon("avast")}<span class="net">${icon("network")}</span>${icon("sound")}
        <time class="clock">14:03</time>
      </div>
    </footer>`;
  }
}

/* ---------- root ---------- */

@customElement("app-root")
class AppRoot extends LitElement {
  static styles = [base, css`
    :host { display: flex; flex-direction: column; height: 100vh; background: #f9f9f9; overflow: hidden; }
    .view { display: flex; flex: 1; min-height: 0; overflow: hidden; }
    admin-menu { flex: none; margin: 15px 20px 0 15px; }
    main { flex: 1; min-width: 0; padding-right: 16px; }
    .scroll { display: flex; flex-direction: column; align-items: center; flex: none; width: 16px; background: #f0f0f0; border-left: 1px solid #e3e3e3; }
    .up, .down { border: 4px solid transparent; }
    .up { margin: 7px 0 22px; border-top: 0; border-bottom-color: #333; }
    .down { margin-top: auto; margin-bottom: 7px; border-bottom: 0; border-top-color: #333; }
    .thumb { display: grid; place-items: center; width: 15px; height: 31.5%; border: 1px solid #8f8f8f; border-radius: 2px; background: linear-gradient(90deg, #f5f5f5, #dedede 50%, #c4c4c4); }
    .thumb::before { content: ""; width: 7px; height: 8px; background: repeating-linear-gradient(#555 0 1px, #eee 1px 3px); }
    .status { flex: none; height: 22px; padding-left: 6px; border-top: 1px solid #8a8a8a; background: #f0edec; font: 11px/20px "Noto Sans", "Open Sans", sans-serif; color: #111; }
    task-bar, browser-chrome { flex: none; }
  `];

  render() {
    return html`
      <browser-chrome></browser-chrome>
      <div class="view">
        <admin-menu></admin-menu>
        <main><stats-page></stats-page></main>
        <div class="scroll" aria-hidden="true"><span class="up"></span><span class="thumb"></span><span class="down"></span></div>
      </div>
      <div class="status">Klaar</div>
      <task-bar></task-bar>`;
  }
}
